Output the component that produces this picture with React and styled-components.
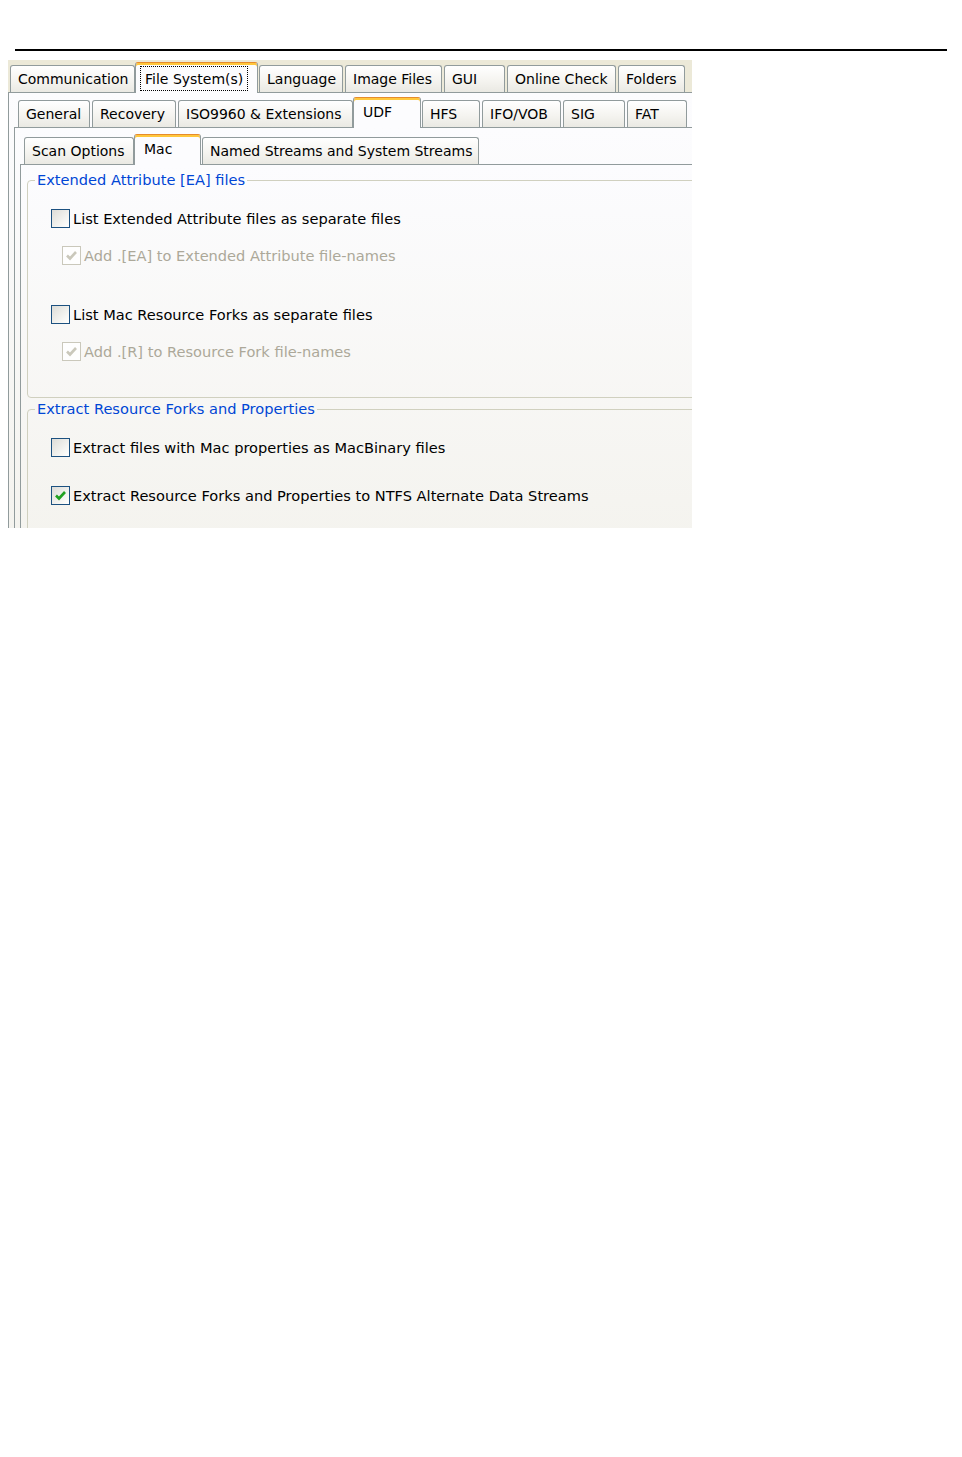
import React from 'react';
import styled, { createGlobalStyle, css } from 'styled-components';

const GlobalStyle = createGlobalStyle`
  html, body {
    margin: 0;
    padding: 0;
    background: #ffffff;
  }
  body {
    font-family: "DejaVu Sans", Verdana, sans-serif;
    font-size: 14px;
    color: #000000;
  }
`;

const Page = styled.div`
  display: flex;
  flex-direction: column;
  padding-top: 49px;
`;

const Rule = styled.div`
  height: 2px;
  width: 932px;
  margin-left: 15px;
  background: #000000;
`;

const Dialog = styled.div`
  width: 684px;
  height: 468px;
  margin: 9px 0 0 8px;
  overflow: hidden;
  background: #ece9d8;
`;

const Frame = styled.div`
  width: 760px;
  height: 490px;
  display: flex;
  flex-direction: column;
`;

const TabControl = styled.div`
  flex: 1;
  display: flex;
  flex-direction: column;
`;

const TabStrip = styled.div`
  display: flex;
  align-items: flex-end;
  gap: 2px;
  box-sizing: border-box;
  height: ${p => p.$h}px;
  padding-left: ${p => p.$pad}px;
  flex-shrink: 0;
`;

const Tab = styled.div`
  position: relative;
  box-sizing: border-box;
  width: ${p => p.$w}px;
  height: 27px;
  display: flex;
  align-items: center;
  padding-left: 7px;
  border: 1px solid #919b9c;
  border-bottom: none;
  border-radius: 3px 3px 0 0;
  background: linear-gradient(#ffffff, #f5f4f0 55%, #eae9e3);
  white-space: nowrap;
  flex-shrink: 0;

  ${p => p.$active && css`
    z-index: 1;
    height: 31px;
    margin: 0 -1px -1px -2px;
    padding-left: 9px;
    padding-bottom: 3px;
    border-top: 1px solid #e68b2c;
    box-shadow: inset 0 2px 0 #ffc73c;
    background: #fcfcfe;
  `}
`;

const Focus = styled.span`
  display: flex;
  align-items: center;
  box-sizing: border-box;
  height: 25px;
  margin: 4px 0 0 -5px;
  padding: 0 4px;
  width: calc(100% - 4px);
  border: 1px dotted #000000;
`;

const TabPanel = styled.div`
  flex: 1;
  display: flex;
  flex-direction: column;
  border: 1px solid #919b9c;
  background: linear-gradient(#fcfcfe, #f4f3ee);
  padding-left: ${p => p.$pad}px;
  padding-top: ${p => p.$top || 0}px;
`;

const GroupBox = styled.fieldset`
  margin: ${p => p.$mt}px 0 0 0;
  padding: 0;
  border: 1px solid #d0d0bf;
  border-radius: 4px;
  min-width: 0;
  font-size: 14.6px;
`;

const Legend = styled.legend`
  margin-left: 7px;
  padding: 0 2px;
  line-height: 16px;
  color: #0046d5;
`;

const Options = styled.div`
  display: flex;
  flex-direction: column;
  gap: ${p => p.$gap}px;
  padding: 21px 0 ${p => p.$bottom}px 23px;
`;

const Pair = styled.div`
  display: flex;
  flex-direction: column;
  gap: 18px;
`;

const Option = styled.label`
  display: flex;
  align-items: center;
  gap: 3px;
  height: 19px;
  margin-left: ${p => p.$indent || 0}px;
  color: ${p => (p.$disabled ? '#aca899' : '#000000')};
  white-space: nowrap;
`;

const Box = styled.span`
  box-sizing: border-box;
  width: 19px;
  height: 19px;
  flex-shrink: 0;
  display: flex;
  align-items: center;
  justify-content: center;
  border: 1px solid ${p => (p.$disabled ? '#cac8bb' : '#1c5180')};
  background: ${p => (p.$disabled ? '#fefefe' : 'linear-gradient(135deg, #dcdcd7, #f6f6f3 70%, #ffffff)')};
`;

function CheckBox({ checked, disabled }) {
  return (
    <Box $disabled={disabled}>
      {checked && (
        <svg width="13" height="13" viewBox="0 0 13 13">
          <path
            d="M2 6.5 L5 9.5 L11 3"
            fill="none"
            stroke={disabled ? '#cac8bb' : '#21a121'}
            strokeWidth="2.6"
          />
        </svg>
      )}
    </Box>
  );
}

function CheckOption({ label, checked, disabled, indent }) {
  return (
    <Option $disabled={disabled} $indent={indent}>
      <CheckBox checked={checked} disabled={disabled} />
      <span>{label}</span>
    </Option>
  );
}

function Tabs({ items, h, pad }) {
  return (
    <TabStrip $h={h} $pad={pad}>
      {items.map(t => (
        <Tab key={t.label} $w={t.w} $active={t.active}>
          {t.focus ? <Focus>{t.label}</Focus> : t.label}
        </Tab>
      ))}
    </TabStrip>
  );
}

const mainTabs = [
  { label: 'Communication', w: 125 },
  { label: 'File System(s)', w: 123, active: true, focus: true },
  { label: 'Language', w: 84 },
  { label: 'Image Files', w: 97 },
  { label: 'GUI', w: 61 },
  { label: 'Online Check', w: 109 },
  { label: 'Folders', w: 67 },
];

const fsTabs = [
  { label: 'General', w: 72 },
  { label: 'Recovery', w: 84 },
  { label: 'ISO9960 & Extensions', w: 175 },
  { label: 'UDF', w: 68, active: true },
  { label: 'HFS', w: 58 },
  { label: 'IFO/VOB', w: 79 },
  { label: 'SIG', w: 62 },
  { label: 'FAT', w: 60 },
];

const udfTabs = [
  { label: 'Scan Options', w: 110 },
  { label: 'Mac', w: 67, active: true },
  { label: 'Named Streams and System Streams', w: 277 },
];

export default function App() {
  return (
    <>
      <GlobalStyle />
      <Page>
        <Rule />
        <Dialog>
          <Frame>
            <TabControl>
              <Tabs items={mainTabs} h={32} pad={2} />
              <TabPanel $pad={5}>
                <TabControl>
                  <Tabs items={fsTabs} h={34} pad={4} />
                  <TabPanel $pad={5}>
                    <TabControl>
                      <Tabs items={udfTabs} h={36} pad={4} />
                      <TabPanel $pad={6} $top={7}>
                        <GroupBox $mt={0}>
                          <Legend>Extended Attribute [EA] files</Legend>
                          <Options $gap={40} $bottom={36}>
                            <Pair>
                              <CheckOption label="List Extended Attribute files as separate files" />
                              <CheckOption label="Add .[EA] to Extended Attribute file-names" checked disabled indent={11} />
                            </Pair>
                            <Pair>
                              <CheckOption label="List Mac Resource Forks as separate files" />
                              <CheckOption label="Add .[R] to Resource Fork file-names" checked disabled indent={11} />
                            </Pair>
                          </Options>
                        </GroupBox>
                        <GroupBox $mt={3}>
                          <Legend>Extract Resource Forks and Properties</Legend>
                          <Options $gap={29} $bottom={40}>
                            <CheckOption label="Extract files with Mac properties as MacBinary files" />
                            <CheckOption label="Extract Resource Forks and Properties to NTFS Alternate Data Streams" checked />
                          </Options>
                        </GroupBox>
                      </TabPanel>
                    </TabControl>
                  </TabPanel>
                </TabControl>
              </TabPanel>
            </TabControl>
          </Frame>
        </Dialog>
      </Page>
    </>
  );
}
